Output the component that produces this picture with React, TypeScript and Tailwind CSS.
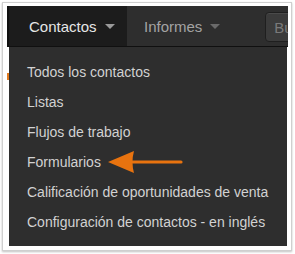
import React from 'react';

const Caret = ({ color }: { color: string }) => (
  <svg width="10" height="5" viewBox="0 0 10 5" className="ml-[8px] mt-[1px] shrink-0">
    <path d="M0 0h10L5 5Z" fill={color} />
  </svg>
);

const items = [
  'Todos los contactos',
  'Listas',
  'Flujos de trabajo',
  'Formularios',
  'Calificación de oportunidades de venta',
  'Configuración de contactos - en inglés',
];

const App: React.FC = () => {
  return (
    <div className="h-[254px] w-[295px] bg-white px-[2px] pt-[2px] font-['Liberation_Sans',Arial,sans-serif]">
      <div className="h-[249px] w-[290px] border border-[#cfcfcf] bg-white pl-[4px] pt-[3px] shadow-[0_1px_2px_rgba(0,0,0,0.25)]">
        <div className="w-[281px]">
          {/* top nav */}
          <div className="flex h-[41px] items-stretch overflow-hidden border-b border-[#101010] bg-[#2e2e2e]">
            <div className="flex w-[120px] shrink-0 items-center border-l-2 border-[#111] bg-[#1c1c1c] pl-[20px]">
              <span className="text-[15px] leading-none whitespace-nowrap text-[#e6e6e6]">Contactos</span>
              <Caret color="#9a9a9a" />
            </div>
            <div className="flex shrink-0 items-center pl-[17px]">
              <span className="text-[15px] leading-none whitespace-nowrap text-[#a3a3a3]">Informes</span>
              <Caret color="#6a6a6a" />
            </div>
            <div className="ml-[45px] mt-[6px] flex h-[30px] w-[40px] shrink-0 items-center rounded-[4px] border border-[#1f1f1f] bg-[#3b3b3b] pl-[8px] shadow-[inset_0_1px_0_rgba(255,255,255,0.08)]">
              <span className="text-[15px] leading-none text-[#7a7a7a]">Bu</span>
            </div>
          </div>

          {/* page area under nav */}
          <div className="flex">
            <div className="w-[2px] shrink-0">
              <div className="mt-[26px] h-[7px] w-[2px] bg-[#e07a1f]" />
            </div>
            <div className="relative h-[199px] w-[278px] bg-[#2e2e2e] pb-[9px] pl-[18px] pt-[10px]">
              {items.map((label) => (
                <div key={label} className="h-[30px] text-[14px] leading-[30px] whitespace-nowrap text-[#d2d2d2]">
                  {label}
                </div>
              ))}
              <svg
                width="78"
                height="24"
                viewBox="0 0 78 24"
                className="absolute left-[98px] top-[103px]"
              >
                <path d="M1 12 L27 1 Q24 12 27 23 Z" fill="#e8730f" />
                <path d="M24 12 H74" stroke="#e8730f" strokeWidth="3.2" strokeLinecap="round" />
              </svg>
            </div>
          </div>
        </div>
      </div>
    </div>
  );
};

export default App;
